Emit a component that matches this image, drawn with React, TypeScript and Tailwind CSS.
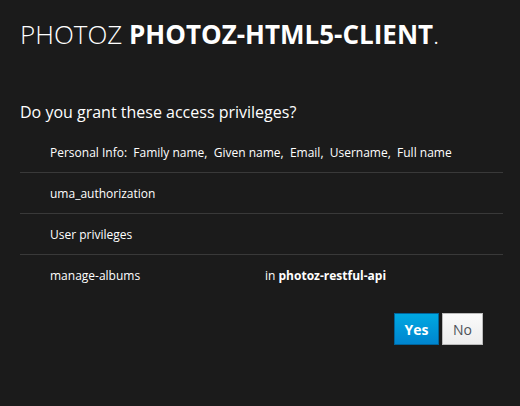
export default function App() {
    const rows = [
        "Personal Info:\u00a0 Family name,\u00a0 Given name,\u00a0 Email,\u00a0 Username,\u00a0 Full name",
        "uma_authorization",
        "User privileges",
    ];

    return (
        <div className="w-[520px] h-[406px] bg-[#1b1b1b] text-white font-['Open_Sans',sans-serif] overflow-hidden">
            <div className="pl-[20px] pr-[17px] pt-[16px]">
                {/* header */}
                <h1 className="text-[26px] leading-[36px] font-light">
                    PHOTOZ <strong className="font-bold">PHOTOZ-HTML5-CLIENT</strong>.
                </h1>

                <p className="mt-[49px] text-[16px] leading-[22px]">Do you grant these access privileges?</p>

                <ul className="mt-[9px] text-[12px] leading-[17px]">
                    {rows.map((row, index) => (
                        <li key={index} className="h-[41px] pl-[30px] flex items-center border-b border-[#393939]">
                            {row}
                        </li>
                    ))}
                    <li className="h-[41px] pl-[30px] flex items-center">
                        <span className="w-[215px]">manage-albums</span>
                        <span>
                            in <strong className="font-bold">photoz-restful-api</strong>
                        </span>
                    </li>
                </ul>

                <div className="mt-[17px] pr-[20px] flex justify-end gap-[3px]">
                    <button className="w-[45px] h-[32px] text-[14px] font-bold text-white border border-[#00659c] bg-gradient-to-b from-[#00a8e1] to-[#0085cf]">
                        Yes
                    </button>
                    <button className="w-[41px] h-[32px] text-[14px] text-[#4d5258] border border-[#bbbbbb] bg-gradient-to-b from-[#fafafa] to-[#ededed]">
                        No
                    </button>
                </div>
            </div>
        </div>
    );
}
